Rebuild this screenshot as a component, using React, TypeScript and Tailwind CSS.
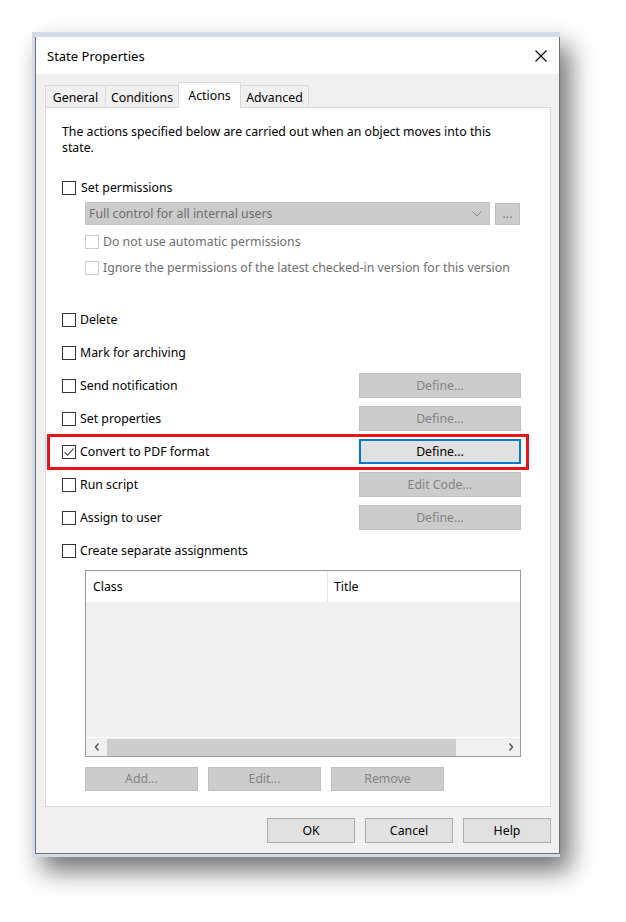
import React from 'react';

const CheckBox = ({ checked = false, disabled = false }: { checked?: boolean; disabled?: boolean }) => (
  <span
    className={`w-[14px] h-[14px] shrink-0 border bg-white flex items-center justify-center ${
      disabled ? 'border-[#cccccc]' : 'border-[#333333]'
    }`}
  >
    {checked && (
      <svg width="12" height="12" viewBox="0 0 12 12">
        <path d="M1.5 6 L4.5 9.3 L10.5 2.5" fill="none" stroke="#333333" strokeWidth="1.1" />
      </svg>
    )}
  </span>
);

const Button = ({
  label,
  disabled = false,
  focused = false,
  className = '',
}: {
  label: string;
  disabled?: boolean;
  focused?: boolean;
  className?: string;
}) => (
  <div
    className={`flex items-center justify-center shrink-0 ${
      disabled
        ? 'bg-[#cccccc] border border-[#bfbfbf] text-[#838383]'
        : focused
        ? 'bg-[#e1e1e1] border-2 border-[#0078d7] text-black'
        : 'bg-[#e1e1e1] border border-[#adadad] text-black'
    } ${className}`}
  >
    {label}
  </div>
);

const Tab = ({ label, width, selected = false }: { label: string; width: string; selected?: boolean }) => (
  <div
    className={`-ml-px first:ml-0 border border-b-0 border-[#d9d9d9] flex justify-center ${width} ${
      selected ? 'h-[26px] bg-white relative z-10 -mb-px pt-[5px]' : 'h-[22px] bg-[#f0f0f0] pt-[4px]'
    }`}
  >
    {label}
  </div>
);

const actions = [
  { label: 'Delete' },
  { label: 'Mark for archiving' },
  { label: 'Send notification', button: 'Define...' },
  { label: 'Set properties', button: 'Define...' },
  { label: 'Convert to PDF format', button: 'Define...', checked: true, active: true },
  { label: 'Run script', button: 'Edit Code...' },
  { label: 'Assign to user', button: 'Define...' },
  { label: 'Create separate assignments' },
];

const App = () => {
  return (
    <div className="w-[626px] h-[922px] bg-white pt-[32px] pl-[32px] font-['Noto_Sans',sans-serif] text-[12.3px] leading-[16px] text-black">
      {/* window frame */}
      <div className="w-[528px] h-[825px] bg-[#d3dbe8] pt-[5px] pl-[3px] pr-[1px] pb-[3px] shadow-[10px_14px_24px_rgba(0,0,0,0.55)] flex">
        <div className="flex-1 flex flex-col border border-t-0 border-[#6e6e6e]">
          {/* title bar */}
          <div className="h-[37px] bg-white flex items-center pl-[11px] pr-[12px]">
            <span className="text-[13px]">State Properties</span>
            <svg className="ml-auto" width="12" height="12" viewBox="0 0 12 12">
              <path d="M0.5 0.5 L11.5 11.5 M11.5 0.5 L0.5 11.5" stroke="#000" strokeWidth="1.1" />
            </svg>
          </div>

          {/* body */}
          <div className="flex-1 bg-[#f0f0f0] pt-[8px] pl-[9px] pr-[8px] flex flex-col">
            <div className="h-[25px] flex items-end">
              <Tab label="General" width="w-[61px]" />
              <Tab label="Conditions" width="w-[74px]" />
              <Tab label="Actions" width="w-[63px]" selected />
              <Tab label="Advanced" width="w-[69px]" />
            </div>

            <div className="h-[700px] bg-white border border-[#d9d9d9] pt-[16px] pl-[16px] pr-[29px] flex flex-col">
              <p>
                The actions specified below are carried out when an object moves into this
                <br />
                state.
              </p>

              <div className="mt-[22px] h-[20px] flex items-center gap-[5px]">
                <CheckBox />
                <span>Set permissions</span>
              </div>

              <div className="mt-[4px] ml-[23px] flex items-center gap-[5px]">
                <div className="w-[405px] h-[23px] bg-[#cccccc] border border-[#c4c4c4] flex items-center pl-[3px] pr-[7px] text-[#6d6d6d]">
                  <span>Full control for all internal users</span>
                  <svg className="ml-auto" width="10" height="6" viewBox="0 0 10 6">
                    <path d="M0.5 0.5 L5 5 L9.5 0.5" fill="none" stroke="#8c8c8c" strokeWidth="1" />
                  </svg>
                </div>
                <Button label="..." disabled className="w-[25px] h-[22px]" />
              </div>

              <div className="mt-[7px] ml-[23px] h-[20px] flex items-center gap-[4px] text-[#6d6d6d]">
                <CheckBox disabled />
                <span>Do not use automatic permissions</span>
              </div>
              <div className="mt-[6px] ml-[23px] h-[20px] flex items-center gap-[4px] text-[#6d6d6d]">
                <CheckBox disabled />
                <span>Ignore the permissions of the latest checked-in version for this version</span>
              </div>

              <div className="mt-[25px] flex flex-col">
                {actions.map((a) => (
                  <div key={a.label} className="relative h-[33px] flex items-center gap-[4px]">
                    <CheckBox checked={a.checked} />
                    <span>{a.label}</span>
                    {a.button && (
                      <Button
                        label={a.button}
                        disabled={!a.active}
                        focused={a.active}
                        className="ml-auto w-[162px] h-[25px]"
                      />
                    )}
                    {a.active && (
                      <div className="absolute -left-[15px] -right-[8px] -top-px h-[36px] border-[3px] border-[#e8141c] pointer-events-none" />
                    )}
                  </div>
                ))}
              </div>

              {/* assignments list */}
              <div className="mt-[3px] ml-[23px] w-[436px] h-[187px] border border-[#9a9a9a] flex flex-col">
                <div className="h-[31px] bg-white flex">
                  <div className="w-[242px] border-r border-[#e5e5e5] pl-[7px] flex items-center">Class</div>
                  <div className="flex-1 pl-[6px] flex items-center">Title</div>
                </div>
                <div className="flex-1 bg-[#f0f0f0]" />
                <div className="h-[19px] bg-[#f0f0f0] border-t border-white flex items-center">
                  <div className="w-[21px] flex justify-center">
                    <svg width="6" height="8" viewBox="0 0 6 8">
                      <path d="M4.5 0.5 L1.5 4 L4.5 7.5" fill="none" stroke="#606060" strokeWidth="1.6" />
                    </svg>
                  </div>
                  <div className="w-[349px] h-[17px] bg-[#cdcdcd]" />
                  <div className="flex-1 flex justify-end pr-[6px]">
                    <svg width="6" height="8" viewBox="0 0 6 8">
                      <path d="M1.5 0.5 L4.5 4 L1.5 7.5" fill="none" stroke="#606060" strokeWidth="1.6" />
                    </svg>
                  </div>
                </div>
              </div>

              <div className="mt-[10px] ml-[23px] flex gap-[10px]">
                <Button label="Add..." disabled className="w-[113px] h-[24px]" />
                <Button label="Edit..." disabled className="w-[113px] h-[24px]" />
                <Button label="Remove" disabled className="w-[113px] h-[24px]" />
              </div>
            </div>

            <div className="mt-[11px] flex justify-end gap-[10px]">
              <Button label="OK" className="w-[88px] h-[25px]" />
              <Button label="Cancel" className="w-[88px] h-[25px]" />
              <Button label="Help" className="w-[88px] h-[25px]" />
            </div>
          </div>
        </div>
      </div>
    </div>
  );
};

export default App;
